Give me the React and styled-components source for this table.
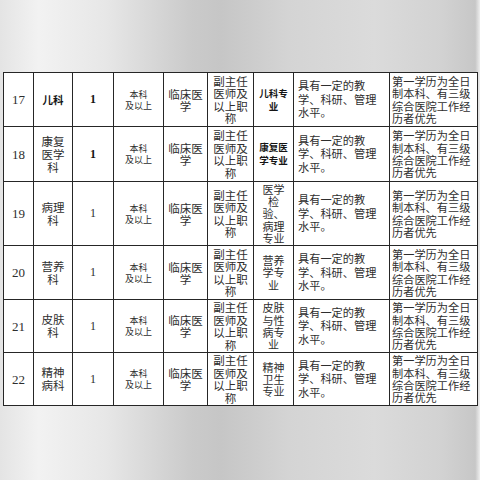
import React from "react";
import styled, { createGlobalStyle } from "styled-components";

const Global = createGlobalStyle`
  html, body {
    margin: 0;
    padding: 0;
  }
  body {
    width: 480px;
    height: 480px;
    overflow: hidden;
    background: linear-gradient(
      90deg,
      #e4e4e4 0%,
      #f2f2f2 8%,
      #e7e7e7 22%,
      #cacaca 40%,
      #c6c6c6 46%,
      #d4d4d4 60%,
      #dbdbdb 78%,
      #d2d2d2 92%,
      #c7c7c7 99%,
      #eeeeee 100%
    );
  }
`;

const CJK = `"Noto Sans CJK SC", "Noto Sans", sans-serif`;
const NUM = `"Liberation Serif", "Noto Sans CJK SC", serif`;

const common = {
  edu: ["本科", "及以上"],
  degree: ["临床医", "学"],
  title: ["副主任", "医师及", "以上职", "称"],
  req: ["具有一定的教", "学、科研、管理", "水平。"],
  other: ["第一学历为全日", "制本科、有三级", "综合医院工作经", "历者优先"],
};

const rows = [
  { no: 17, h: 54, dept: ["儿科"], deptBold: true, countBold: true, major: ["儿科专", "业"], majorBold: true },
  { no: 18, h: 55, dept: ["康复", "医学", "科"], countBold: true, major: ["康复医", "学专业"], majorBold: true },
  { no: 19, h: 64, dept: ["病理", "科"], major: ["医学", "检", "验、", "病理", "专业"] },
  { no: 20, h: 54, dept: ["营养", "科"], major: ["营养", "学专", "业"] },
  { no: 21, h: 53, dept: ["皮肤", "科"], major: ["皮肤", "与性", "病专", "业"] },
  { no: 22, h: 53, dept: ["精神", "病科"], major: ["精神", "卫生", "专业"] },
];

const widths = [30, 39, 41, 50, 44, 46, 40, 96, 88];

const Page = styled.div`
  padding: 72px 0 0 3px;
`;

const Sheet = styled.table`
  width: 475px;
  border-collapse: collapse;
  table-layout: fixed;
  background: #ffffff;
  border: 1px solid #262626;
`;

const Row = styled.tr`
  height: ${(p) => p.$h}px;
`;

const Cell = styled.td`
  border: 1px solid #262626;
  padding: 0 ${(p) => p.$pad ?? 1}px;
  vertical-align: middle;
  text-align: ${(p) => p.$align || "center"};
  font-family: ${(p) => (p.$num ? NUM : CJK)};
  font-size: ${(p) => p.$size || 12}px;
  line-height: ${(p) => p.$lh || 13}px;
  font-weight: ${(p) => (p.$bold ? 700 : 400)};
  color: ${(p) => (p.$bold ? "#151515" : "#2e2e2e")};
  white-space: nowrap;
  overflow: hidden;
`;

const Lines = ({ items }) =>
  items.map((t, i) => (
    <React.Fragment key={i}>
      {i > 0 && <br />}
      {t}
    </React.Fragment>
  ));

export default function App() {
  return (
    <>
      <Global />
      <Page>
        <Sheet>
          <colgroup>
            {widths.map((w, i) => (
              <col key={i} style={{ width: w }} />
            ))}
          </colgroup>
          <tbody>
            {rows.map((r) => (
              <Row key={r.no} $h={r.h}>
                <Cell $num $size={13}>{r.no}</Cell>
                <Cell $bold={r.deptBold} $size={r.deptBold ? 10.5 : 11.5} $lh={13}>
                  <Lines items={r.dept} />
                </Cell>
                <Cell $num $bold={r.countBold} $size={12}>1</Cell>
                <Cell $size={9} $lh={11}>
                  <Lines items={common.edu} />
                </Cell>
                <Cell $size={11.5} $lh={12}>
                  <Lines items={common.degree} />
                </Cell>
                <Cell $size={11.5} $lh={12.5}>
                  <Lines items={common.title} />
                </Cell>
                <Cell
                  $bold={r.majorBold}
                  $size={r.majorBold ? 9.5 : 11}
                  $lh={r.majorBold ? 13 : 12.3}
                >
                  <Lines items={r.major} />
                </Cell>
                <Cell $align="left" $pad={4} $size={11.2} $lh={13.5}>
                  <Lines items={common.req} />
                </Cell>
                <Cell $align="left" $pad={2} $size={11.2} $lh={12.3}>
                  <Lines items={common.other} />
                </Cell>
              </Row>
            ))}
          </tbody>
        </Sheet>
      </Page>
    </>
  );
}
